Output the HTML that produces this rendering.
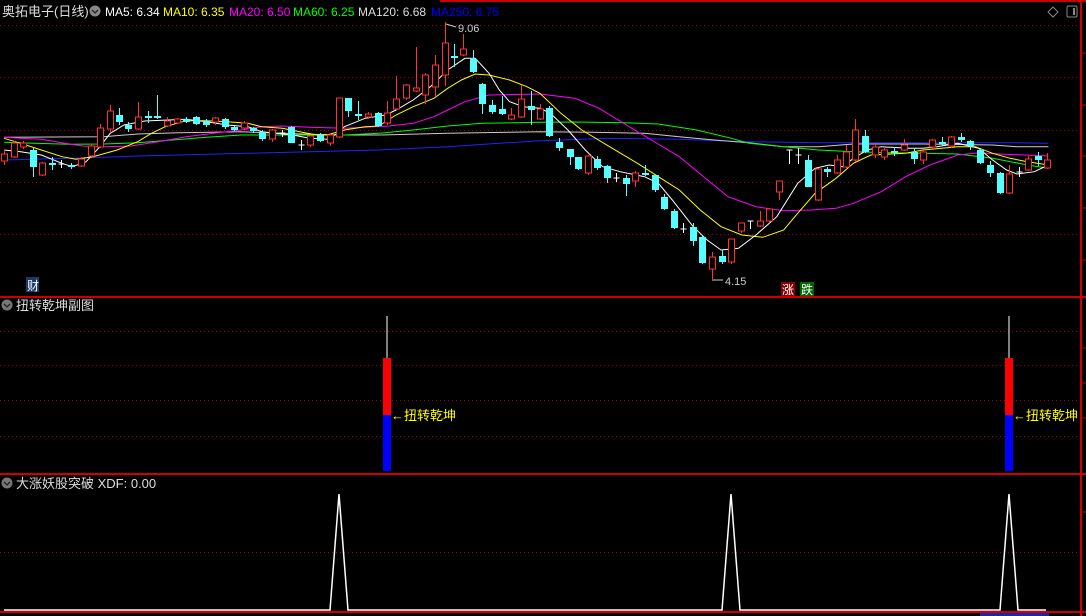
<!DOCTYPE html>
<html><head><meta charset="utf-8"><style>
html,body{margin:0;padding:0;background:#000;width:1086px;height:616px;overflow:hidden}
svg{display:block}
text{font-family:"Liberation Sans","Noto Sans CJK SC",sans-serif}
</style></head><body>
<svg id="s" width="1086" height="616" viewBox="0 0 1086 616" xmlns="http://www.w3.org/2000/svg">
<rect width="1086" height="616" fill="#000"/>
<g stroke="#a00" stroke-width="1" stroke-dasharray="1,3">
<line x1="0" y1="25.5" x2="1080" y2="25.5"/><line x1="0" y1="77.5" x2="1080" y2="77.5"/>
<line x1="0" y1="130.5" x2="1080" y2="130.5"/><line x1="0" y1="182.5" x2="1080" y2="182.5"/>
<line x1="0" y1="234.5" x2="1080" y2="234.5"/>
<line x1="0" y1="331.5" x2="1080" y2="331.5"/><line x1="0" y1="365.5" x2="1080" y2="365.5"/>
<line x1="0" y1="400.5" x2="1080" y2="400.5"/><line x1="0" y1="436.5" x2="1080" y2="436.5"/>
<line x1="0" y1="552.5" x2="1080" y2="552.5"/>
</g>
<g stroke="#c00" stroke-width="2">
<line x1="440" y1="1" x2="1086" y2="1"/>
<line x1="0" y1="297" x2="1086" y2="297"/>
<line x1="0" y1="474" x2="1086" y2="474"/>
<line x1="0" y1="612" x2="1086" y2="612"/>
<line x1="1081" y1="0" x2="1081" y2="616"/>
</g>
<g stroke="#c00"><line x1="1081" y1="53" x2="1086" y2="53"/><line x1="1081" y1="105" x2="1086" y2="105"/><line x1="1081" y1="156" x2="1086" y2="156"/><line x1="1081" y1="208" x2="1086" y2="208"/><line x1="1081" y1="260" x2="1086" y2="260"/><line x1="1081" y1="348" x2="1086" y2="348"/><line x1="1081" y1="383" x2="1086" y2="383"/><line x1="1081" y1="418" x2="1086" y2="418"/><line x1="1081" y1="512" x2="1086" y2="512"/></g>
<rect x="980" y="613" width="69" height="3" fill="#22a"/>
<g id="ma" fill="none" stroke-width="1"></g>
<g id="cd"></g>
<!-- header -->
<text x="2" y="16" fill="#ddd" font-size="13">奥拓电子(日线)</text>
<circle cx="95" cy="11" r="5.5" fill="#888"/><path d="M92 10 L95 13 L98 10" stroke="#222" fill="none" stroke-width="1.3"/>
<text x="105" y="16" font-size="12"><tspan fill="#fff">MA5: 6.34</tspan><tspan x="163" fill="#ff0">MA10: 6.35</tspan><tspan x="229" fill="#f0f">MA20: 6.50</tspan><tspan x="293" fill="#0f0">MA60: 6.25</tspan><tspan x="358" fill="#ddd">MA120: 6.68</tspan><tspan x="431" fill="#00f">MA250: 6.75</tspan></text>
<path d="M1053 7 L1058 12 L1053 17 L1048 12 Z" stroke="#888" fill="none"/>
<rect x="1067" y="6" width="10" height="11" rx="1.5" stroke="#888" fill="none"/><rect x="1073" y="8" width="2" height="7" fill="#888"/>
<text x="458" y="32" fill="#ccc" font-size="11">9.06</text><path d="M446 24 L456 27" stroke="#ccc"/>
<text x="725" y="285" fill="#ccc" font-size="11">4.15</text><path d="M712 280 L723 280" stroke="#ccc"/>
<rect x="26" y="277" width="13" height="15" fill="#1a3a6a"/><text x="27" y="290" fill="#fff" font-size="12">财</text>
<rect x="781" y="282" width="14" height="14" fill="#800"/><text x="782" y="294" fill="#fff" font-size="12">涨</text>
<rect x="800" y="282" width="14" height="14" fill="#060"/><text x="801" y="294" fill="#fff" font-size="12">跌</text>
<!-- panel 2 -->
<circle cx="7" cy="305" r="5.5" fill="#777"/><path d="M4 304 L7 307 L10 304" stroke="#222" fill="none" stroke-width="1.3"/>
<text x="16" y="310" fill="#ddd" font-size="13">扭转乾坤副图</text>
<line x1="387" y1="316" x2="387" y2="358" stroke="#fff"/>
<rect x="383" y="358" width="8" height="57" fill="#f00"/><rect x="383" y="415" width="8" height="56" fill="#00f"/>
<text x="391" y="420" fill="#ff0" font-size="13">←扭转乾坤</text>
<line x1="1009" y1="316" x2="1009" y2="358" stroke="#fff"/>
<rect x="1005" y="358" width="8" height="57" fill="#f00"/><rect x="1005" y="415" width="8" height="56" fill="#00f"/>
<text x="1013" y="420" fill="#ff0" font-size="13">←扭转乾坤</text>
<!-- panel 3 -->
<circle cx="7" cy="483" r="5.5" fill="#777"/><path d="M4 482 L7 485 L10 482" stroke="#222" fill="none" stroke-width="1.3"/>
<text x="16" y="488" fill="#ddd" font-size="13">大涨妖股突破 XDF: 0.00</text>
<polyline fill="none" stroke="#fff" stroke-width="1.5" points="4,610 330,610 339,494 348,610 722,610 731,494 740,610 1000,610 1009,494 1018,610 1046,610"/>
</svg>
<script>
var NS="http://www.w3.org/2000/svg";
function el(t,a,p){var e=document.createElementNS(NS,t);for(var k in a)e.setAttribute(k,a[k]);p.appendChild(e);return e;}
// candles: [px, zoom(1/2), type r/c/x, top, bot, whiskTop, whiskBot]
var Z1=[12,42,68,97,123,152,178,207,236,263,291,318,346,373,401,430,457,486,513,541,568,597,625,652,680,708,736,762,791,818,846,874,901,930,957,985,1012,1041,1070,1097,1124,1151,1180,1207,1235,1264,1291,1318,1346,1374,1401,1430,1458,1485,1514,1541,1567];
var D1=[['r',154,161,150,165],['r',143,157,141,158],['r',143,147,141,149],['c',150,167,148,177],['r',163,175,162,176],['c',163,165,157,170],['x',164,164,160,168],['c',165,167,163,169],['r',159,166,157,167],['r',146,156,144,157],['r',128,147,124,148],['r',111,129,105,133],['c',115,122,108,125],['c',125,129,122,132],['r',117,129,102,130],['c',116,118,111,123],['c',116,118,95,119],['r',121,126,117,127],['r',119,123,118,124],['c',119,122,117,123],['c',117,124,116,125],['c',121,125,119,127],['r',118,122,117,125],['c',119,127,118,129],['c',127,130,126,131],['r',123,128,121,129],['c',128,131,127,133],['c',132,139,130,141],['r',130,139,129,142],['x',133,133,130,137],['c',127,143,126,143],['x',145,145,140,150],['r',136,145,135,147],['c',135,141,133,142],['r',135,143,133,146],['r',98,137,98,138],['c',98,111,98,117],['c',114,116,101,120],['r',114,117,112,119],['c',113,126,112,127],['r',113,123,101,125],['r',99,109,76,110],['r',85,98,84,100],['r',88,91,47,92],['r',75,95,73,104],['r',65,87,55,97],['r',43,75,22,86],['c',56,58,44,67],['r',49,55,34,56],['c',59,72,50,73],['c',84,104,83,114],['c',105,112,100,114],['c',109,114,96,115],['r',115,119,108,120],['r',99,117,85,118],['c',106,110,91,125],['r',109,119,104,120]];
var D2=[[27,'c',108,136,106,137],[55,'c',142,148,138,151],[85,'c',149,157,149,165],[110,'c',157,169,157,170],[139,'r',156,173,155,175],[164,'c',159,168,156,170],[193,'c',166,178,165,183],[218,'x',178,178,173,182],[247,'c',178,184,175,196],[273,'r',173,181,171,187],[302,'c',173,175,165,176],[331,'c',175,190,175,192],[357,'c',197,209,194,210],[385,'c',211,228,209,229],[410,'x',229,229,223,233],[440,'c',227,241,223,246],[466,'c',237,263,236,264],[494,'r',257,269,252,279],[523,'c',256,262,250,264],[549,'r',239,262,239,264],[578,'r',223,231,223,233],[604,'x',221,221,221,229],[633,'r',221,226,211,227],[659,'r',209,221,209,222],[687,'r',181,192,181,200],[716,'x',150,150,150,164],[741,'x',155,155,148,164],[771,'c',160,187,155,187],[797,'r',169,200,168,201],[825,'c',169,172,167,177],[852,'r',160,173,155,174],[879,'r',152,167,145,168],[905,'r',130,160,119,162],[934,'c',136,152,130,153],[963,'r',147,155,144,158],[989,'r',150,157,148,160],[1018,'c',151,153,147,156],[1044,'r',145,150,139,151],[1073,'c',152,159,148,164],[1099,'r',152,160,150,164],[1127,'r',140,147,139,149],[1155,'c',142,144,137,146],[1181,'r',137,146,136,148],[1209,'c',137,140,133,142],[1236,'c',141,146,140,150],[1265,'c',150,163,148,164],[1291,'c',165,173,161,177],[1320,'c',173,193,172,194],[1348,'r',174,193,165,194],[1375,'x',172,172,167,177],[1401,'r',159,170,156,171],[1429,'c',156,160,152,166],[1457,'r',160,168,153,169]];
var C=[];
for(var i=0;i<D1.length;i++){var d=D1[i];C.push([Z1[i]/2.904].concat(d));}
for(i=0;i<D2.length;i++){d=D2[i];C.push([540+d[0]/2.872].concat(d.slice(1)));}
var g=document.getElementById('cd');
C.forEach(function(c){
 var x=Math.round(c[0])+0.5,t=c[1],a=c[2],b=c[3],wt=c[4],wb=c[5];
 var col=t=='r'?'#f33':(t=='c'?'#5ff':'#fff');
 el('line',{x1:x,y1:wt,x2:x,y2:wb,stroke:col},g);
 if(t=='x'){el('line',{x1:x-3,y1:a,x2:x+3,y2:a,stroke:col},g);}
 else if(t=='r'){el('rect',{x:x-3,y:a,width:6,height:Math.max(b-a,1),fill:'#000',stroke:col},g);}
 else{el('rect',{x:x-3.5,y:a,width:7,height:Math.max(b-a,2),fill:col},g);}
});
function pl(p1,p2,col){var pts=[];p1.forEach(function(p){pts.push((p[0]/2.904).toFixed(1)+','+(p[1]/3).toFixed(1));});p2.forEach(function(p){pts.push((540+p[0]/2.872).toFixed(1)+','+(p[1]/3).toFixed(1));});el('polyline',{points:pts.join(' '),stroke:col},document.getElementById('ma'));}
pl([[12,480],[200,475],[400,468],[720,460],[900,455],[1100,450],[1300,440],[1450,430],[1568,422]],[[200,415],[400,418],[600,425],[800,428],[1000,428],[1200,428],[1360,428],[1460,430]],'#22f');
pl([[12,412],[300,410],[400,402],[520,398],[700,395],[900,403],[1000,405],[1100,405],[1300,400],[1568,395]],[[150,397],[300,400],[400,410],[500,420],[600,428],[700,440],[800,440],[900,432],[1100,432],[1300,435],[1370,440],[1460,440]],'#ccc');
pl([[12,427],[100,430],[200,433],[300,432],[400,428],[500,420],[600,412],[700,405],[1000,405],[1100,400],[1200,390],[1300,378],[1400,370],[1568,367]],[[100,366],[240,368],[340,372],[450,390],[550,415],[600,430],[700,440],[800,450],[900,455],[1000,458],[1100,460],[1200,462],[1300,475],[1400,495],[1460,505]],'#0f0');
pl([[12,412],[60,415],[120,418],[180,428],[240,438],[300,440],[380,438],[460,425],[540,410],[620,400],[700,390],[760,380],[820,378],[900,382],[1000,385],[1060,382],[1130,378],[1200,370],[1260,350],[1300,330],[1350,305],[1420,285],[1568,282]],[[100,295],[170,325],[240,370],[320,420],[400,470],[470,530],[540,590],[620,620],[700,632],[780,630],[850,625],[900,610],[980,575],[1050,530],[1120,495],[1200,465],[1260,458],[1320,462],[1460,468]],'#f0f');
pl([[12,415],[60,430],[120,450],[180,470],[220,478],[270,470],[340,450],[400,425],[440,400],[480,380],[540,362],[600,362],[660,365],[720,370],[760,380],[820,385],[870,395],[920,405],[950,405],[1000,390],[1060,380],[1100,378],[1150,345],[1200,320],[1260,295],[1300,265],[1340,240],[1380,222],[1420,225],[1480,240],[1530,260],[1568,280]],[[60,340],[120,390],[200,440],[280,490],[340,530],[400,570],[460,630],[520,680],[580,705],[640,712],[700,690],[740,640],[790,580],[850,535],[900,490],[950,465],[1050,460],[1100,450],[1200,440],[1250,440],[1300,460],[1350,475],[1400,485],[1460,495]],'#ff0');
pl([[12,450],[60,455],[120,465],[180,490],[210,500],[250,485],[290,440],[320,400],[360,375],[420,363],[540,358],[600,365],[660,375],[720,380],[760,395],[850,405],[900,415],[950,418],[980,400],[1000,380],[1060,355],[1120,345],[1150,330],[1200,300],[1250,260],[1300,210],[1350,175],[1380,175],[1420,220],[1450,270],[1480,305],[1520,320],[1568,325]],[[30,340],[80,390],[130,450],[180,500],[230,515],[300,530],[340,550],[380,600],[440,680],[480,720],[520,750],[570,745],[620,705],[680,650],[740,550],[790,505],[830,495],[870,500],[900,475],[940,450],[980,440],[1060,445],[1100,445],[1140,440],[1200,430],[1260,445],[1300,480],[1340,510],[1370,522],[1420,515],[1460,495]],'#fff');
</script>
</body></html>
